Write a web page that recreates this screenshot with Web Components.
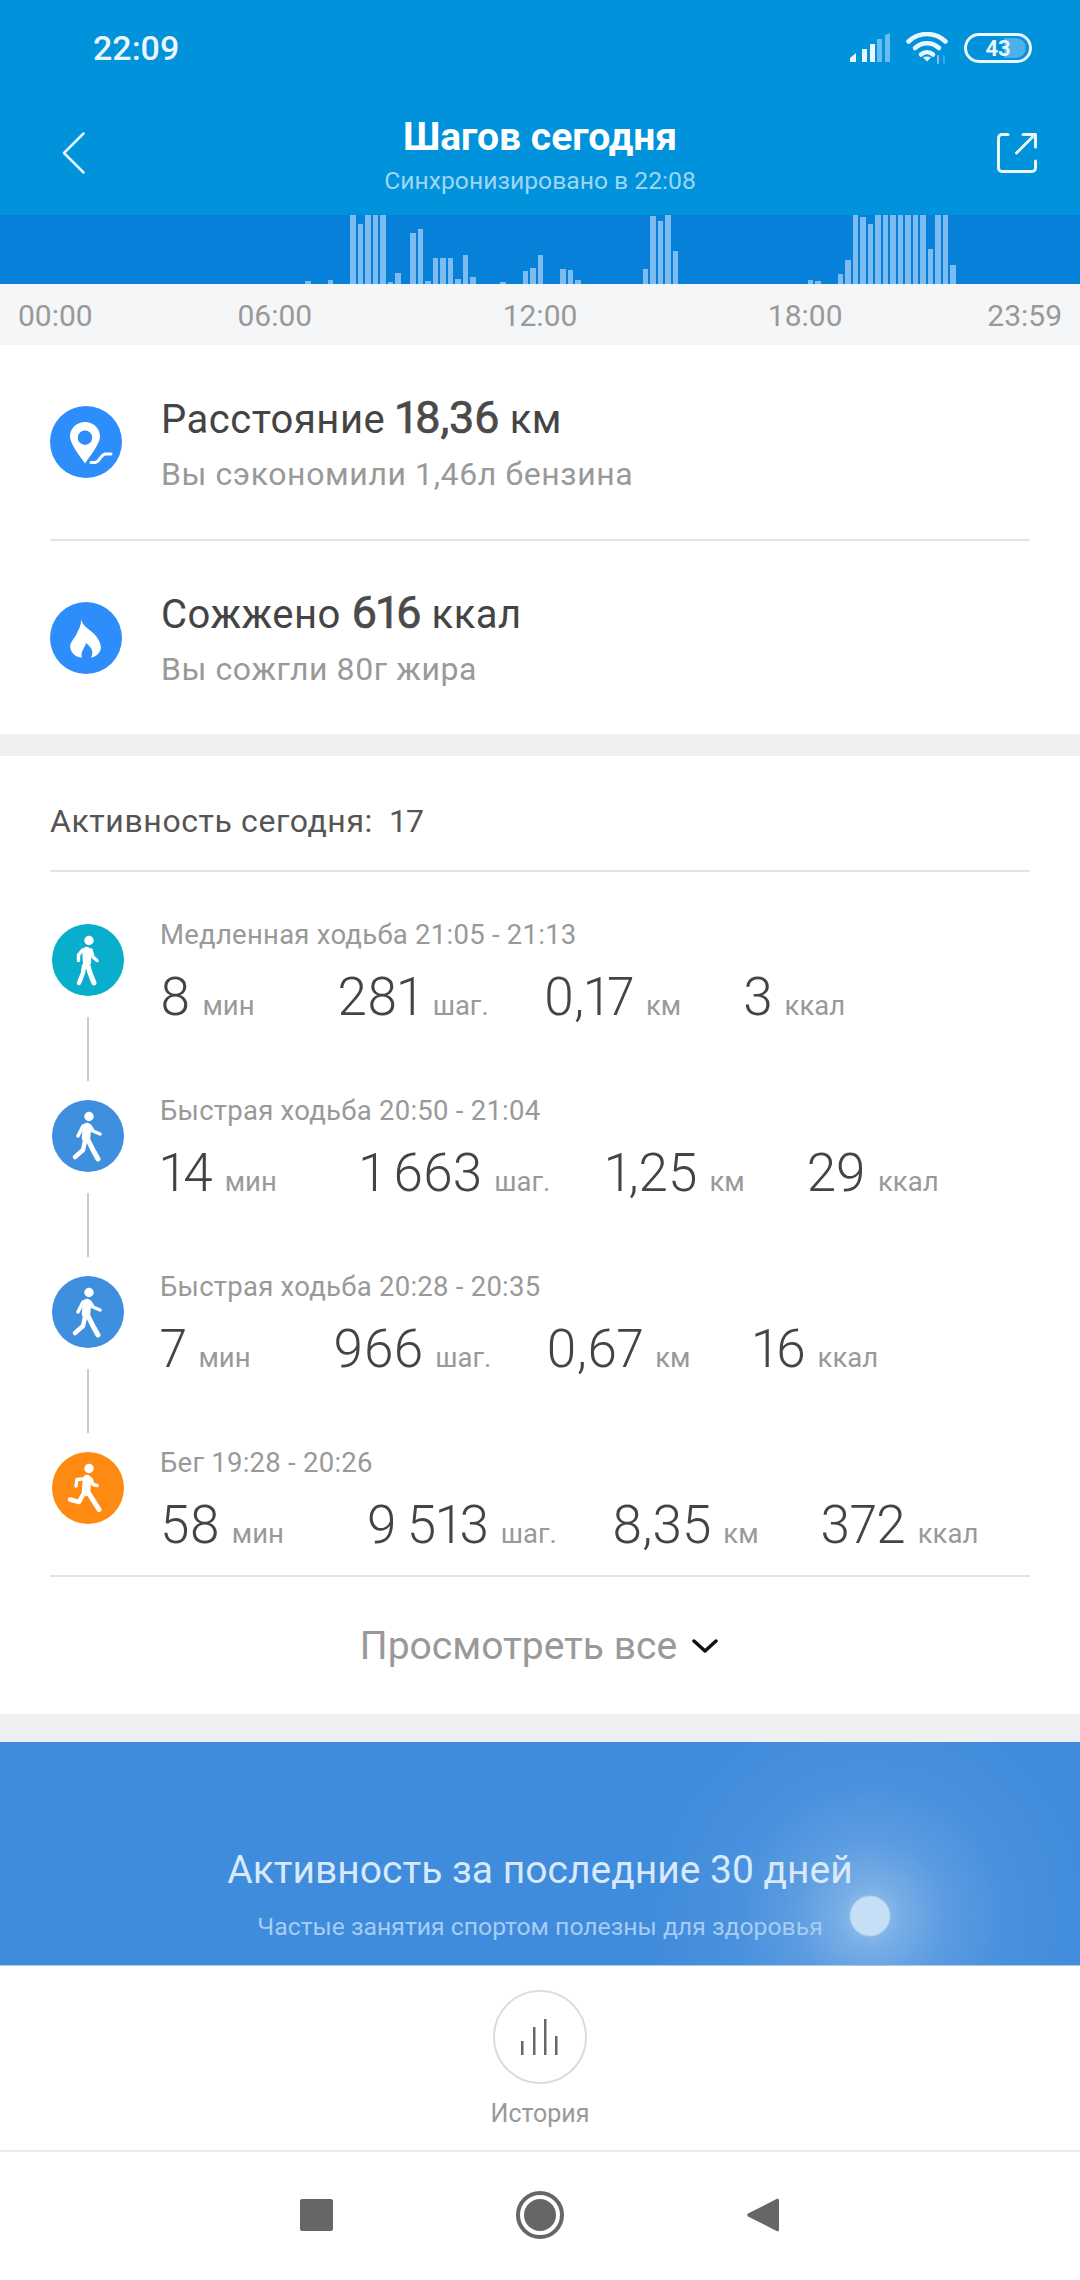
<!DOCTYPE html>
<html lang="ru">
<head>
<meta charset="utf-8">
<style>
  html, body { margin: 0; padding: 0; background: #fff; }
  body { font-family: Roboto, "Noto Sans", sans-serif; width: 1080px; height: 2280px; overflow: hidden; }
</style>
</head>
<body>
<app-header title="Шагов сегодня" sub="Синхронизировано в 22:08" time="22:09" battery="43"></app-header>
<step-chart></step-chart>
<summary-card>
  <summary-row icon="pin" sub="Вы сэкономили 1,46л бензина">Расстояние <b>18,36</b> км</summary-row>
  <summary-row icon="flame" sub="Вы сожгли 80г жира">Сожжено <b>616</b> ккал</summary-row>
</summary-card>
<activity-list count="17">
  <activity-item kind="slow" label="Медленная ходьба 21:05 - 21:13">
    <stat-value n="8" unit="мин"></stat-value><stat-value n="281" unit="шаг."></stat-value><stat-value n="0,17" unit="км"></stat-value><stat-value n="3" unit="ккал"></stat-value>
  </activity-item>
  <activity-item kind="fast" label="Быстрая ходьба 20:50 - 21:04">
    <stat-value n="14" unit="мин"></stat-value><stat-value n="1 663" unit="шаг."></stat-value><stat-value n="1,25" unit="км"></stat-value><stat-value n="29" unit="ккал"></stat-value>
  </activity-item>
  <activity-item kind="fast" label="Быстрая ходьба 20:28 - 20:35">
    <stat-value n="7" unit="мин"></stat-value><stat-value n="966" unit="шаг."></stat-value><stat-value n="0,67" unit="км"></stat-value><stat-value n="16" unit="ккал"></stat-value>
  </activity-item>
  <activity-item kind="run" label="Бег 19:28 - 20:26" last>
    <stat-value n="58" unit="мин"></stat-value><stat-value n="9 513" unit="шаг."></stat-value><stat-value n="8,35" unit="км"></stat-value><stat-value n="372" unit="ккал"></stat-value>
  </activity-item>
</activity-list>
<month-banner title="Активность за последние 30 дней" sub="Частые занятия спортом полезны для здоровья"></month-banner>
<history-button>История</history-button>
<nav-bar></nav-bar>

<script>
// шапка со статус-баром
class AppHeader extends HTMLElement {
  connectedCallback() {
    this.attachShadow({ mode: 'open' });
    this.shadowRoot.innerHTML = `
    <style>
      :host { display: block; height: 215px; background: #0092db; color: #fff; }
      .status { height: 96px; display: flex; align-items: center; padding: 0 48px 0 93px; box-sizing: border-box; }
      .time { font-size: 34px; font-weight: 500; color: #eaf6fd; flex: 1; }
      .status svg { display: block; }
      .wifi { margin-left: 16px; }
      .battery { margin-left: 16px; }
      .bar { height: 119px; display: grid; grid-template-columns: 140px 1fr 140px; }
      .back { padding: 36px 0 0 62px; }
      .share { padding: 37px 0 0 57px; }
      .mid { text-align: center; }
      h1 { margin: 16px 0 0; font-size: 39px; line-height: 50px; font-weight: 700; }
      p { margin: 4px 0 0; font-size: 24.700px; line-height: 30px; color: #9ed6f4; }
    </style>
    <div class="status">
      <span class="time">${this.getAttribute('time')}</span>
      <svg width="40" height="30" viewBox="0 0 40 30">
        <path d="M0 29V25L6 20V29Z" fill="#eaf6fd"/>
        <rect x="12" y="16" width="5" height="13" fill="#eaf6fd"/>
        <rect x="20" y="11" width="5" height="18" fill="#eaf6fd"/>
        <rect x="27" y="6" width="5" height="23" fill="#66bdee"/>
        <path d="M35 2L40 0V29H35Z" fill="#66bdee"/>
      </svg>
      <svg class="wifi" width="42" height="32" viewBox="0 0 42 32" fill="none" stroke="#eaf6fd" stroke-width="4.500" stroke-linecap="round">
        <path d="M2.5 9.5C13 -0.5 29 -0.5 39.5 9.5"/>
        <path d="M9 16C16 9.5 26 9.5 33 16"/>
        <path d="M15 22.500C18.500 19.500 23.500 19.500 27 22.500"/>
        <path d="M21 29.500L17 25.500C19.500 24 22.500 24 25 25.500Z" fill="#eaf6fd" stroke="none"/>
        <path d="M32 24V31" stroke="#7cc6ef" stroke-width="2"/>
        <path d="M38 24V31" stroke="#3ea7e3" stroke-width="2"/>
      </svg>
      <svg class="battery" width="68" height="30" viewBox="0 0 68 30">
        <rect x="1.500" y="1.500" width="65" height="27" rx="13.500" fill="none" stroke="#eaf6fd" stroke-width="3"/>
        <path d="M40 5H52a10 10 0 0 1 0 20H40Z" fill="#4cb1ea"/>
        <text x="34" y="23" text-anchor="middle" font-family="Roboto" font-size="22" font-weight="700" fill="#eaf6fd">${this.getAttribute('battery')}</text>
      </svg>
    </div>
    <div class="bar">
      <div class="back">
        <svg width="24" height="42" viewBox="0 0 24 42" fill="none" stroke="#eaf6fd" stroke-width="2.500" stroke-linecap="round" stroke-linejoin="round"><path d="M21.500 1.500L2 21L21.500 40.500"/></svg>
      </div>
      <div class="mid">
        <h1>${this.getAttribute('title')}</h1>
        <p>${this.getAttribute('sub')}</p>
      </div>
      <div class="share">
        <svg width="41" height="40" viewBox="0 0 41 40" fill="none" stroke="#eaf6fd" stroke-width="3" stroke-linecap="round" stroke-linejoin="round">
          <path d="M11 1.500H5a3.500 3.500 0 0 0-3.500 3.500V35a3.500 3.500 0 0 0 3.500 3.500H35a3.500 3.500 0 0 0 3.500-3.500V28"/>
          <path d="M19.500 20L38 1.500"/>
          <path d="M26 1.500H38.500V14"/>
        </svg>
      </div>
    </div>`;
  }
}

// столбики по 10 минут: индекс -> высота
const STEP_BARS = {40:3,43:4,46:69,47:60,48:69,49:69,50:69,51:2,52:11,54:51,55:55,56:3,57:26,58:26,59:26,60:5,61:29,62:7,66:2,69:13,70:16,71:29,74:15,75:14,76:4,85:15,86:68,87:63,88:69,89:33,107:4,108:3,111:10,112:24,113:69,114:67,115:60,116:69,117:69,118:69,119:69,120:69,121:69,122:69,123:35,124:69,125:69,126:19};

class StepChart extends HTMLElement {
  connectedCallback() {
    this.attachShadow({ mode: 'open' });
    let bars = '';
    for (let i = 0; i < 144; i++) {
      bars += `<i style="height:${STEP_BARS[i] || 0}px"></i>`;
    }
    this.shadowRoot.innerHTML = `
    <style>
      :host { display: block; }
      .bars { height: 69px; background: #0680d8; display: flex; align-items: flex-end; gap: 2px; padding-left: 5px; overflow: hidden; }
      i { display: block; flex: 0 0 5.500px; background: #7cbcf0; }
      .labels { height: 61px; background: #f5f6f8; display: flex; justify-content: space-between; align-items: center; padding: 2px 18px 0; box-sizing: border-box; font-size: 30px; color: #999; }
      .mid { width: 605px; display: flex; justify-content: space-between; }
    </style>
    <div class="bars">${bars}</div>
    <div class="labels">
      <span>00:00</span>
      <div class="mid"><span>06:00</span><span>12:00</span><span>18:00</span></div>
      <span>23:59</span>
    </div>`;
  }
}

class SummaryCard extends HTMLElement {
  connectedCallback() {
    this.attachShadow({ mode: 'open' });
    this.shadowRoot.innerHTML = `
    <style>
      :host { display: block; height: 389px; background: #fff; padding: 0 50px; }
      ::slotted(summary-row:first-child) { height: 196px; border-bottom: 2px solid #e4e4e4; }
      ::slotted(summary-row:last-child) { height: 193px; }
    </style>
    <slot></slot>`;
  }
}

const SUMMARY_ICONS = {
  pin: `<path fill-rule="evenodd" d="M35 16C26.500 16 20 22.500 20 30.500C20 38 30 50 35 57.500C40 50 50 38 50 30.500C50 22.500 43.500 16 35 16ZM35 24.500a7.200 7.200 0 1 1 0 14.400a7.200 7.200 0 0 1 0-14.400Z" fill="#fff"/>
        <path d="M41 56.500H45C50 56.500 50 48 56 48H61" fill="none" stroke="#fff" stroke-width="3" stroke-linecap="round"/>`,
  flame: `<path d="M31 17.500C33 25 40 27 46 34C51 41 53 47 48 52C46 54 43 55.500 41 55.500C44 50 42 46 36 41C35 46 30 50 32 55.500C27 55.500 22 52 20.500 47C19 40 24 38 27 31C29 27 31 24 31 17.500Z" fill="#fff"/>`
};

class SummaryRow extends HTMLElement {
  connectedCallback() {
    this.attachShadow({ mode: 'open' });
    this.shadowRoot.innerHTML = `
    <style>
      :host { display: flex; align-items: center; box-sizing: border-box; gap: 39px; }
      svg { display: block; flex: none; border-radius: 50%; background: #2d8efb; }
      .main { font-size: 40px; line-height: 50px; padding-top: 2px; color: #444; letter-spacing: .5px; }
      .sub { margin-top: 9px; font-size: 32px; line-height: 40px; color: #999; letter-spacing: .6px; }
      ::slotted(b) { font-size: 45px; font-weight: 400; letter-spacing: -.4px; color: #4a4a4a; -webkit-text-stroke: .7px #4a4a4a; font-variant-numeric: proportional-nums; }
    </style>
    <svg width="72" height="72" viewBox="0 0 72 72">${SUMMARY_ICONS[this.getAttribute('icon')]}</svg>
    <div>
      <div class="main"><slot></slot></div>
      <div class="sub">${this.getAttribute('sub')}</div>
    </div>`;
  }
}

class ActivityList extends HTMLElement {
  connectedCallback() {
    this.attachShadow({ mode: 'open' });
    this.shadowRoot.innerHTML = `
    <style>
      :host { display: block; margin-top: 22px; height: 958px; box-sizing: border-box; padding: 0 50px; background: #fff; }
      :host { box-shadow: 0 -22px 0 #eeeff1, 0 28px 0 #eeeff1; }
      .head { height: 116px; box-sizing: border-box; border-bottom: 2px solid #e4e4e4; display: flex; align-items: center; font-size: 32px; color: #555; padding-top: 16px; letter-spacing: .6px; }
      .head span { margin-left: 16px; letter-spacing: -1px; }
      .items { height: 705px; padding-top: 46px; box-sizing: border-box; border-bottom: 2px solid #e4e4e4; }
      .more { display: flex; justify-content: center; align-items: center; gap: 15px; height: 135px; padding: 2px 2px 0 0; font-size: 39px; color: #999; box-sizing: border-box; }
    </style>
    <div class="head">Активность сегодня:<span>${this.getAttribute('count')}</span></div>
    <div class="items"><slot></slot></div>
    <div class="more">Просмотреть все
      <svg width="26" height="14" viewBox="0 0 26 14" fill="none" stroke="#111" stroke-width="3.500" stroke-linecap="round" stroke-linejoin="round"><path d="M2 2L13 12L24 2"/></svg>
    </div>`;
  }
}

const WALKERS = {
  slow: { color: '#08aecb', paths: `
    <path d="M34.500 27L35 38" stroke-width="8.500"/>
    <path d="M30.500 26L26.500 31L26.500 36.500" stroke-width="3.500"/>
    <path d="M39 26L41 33L45 36.500" stroke-width="3.500"/>
    <path d="M32 42L31 49L27 59" stroke-width="4.500"/>
    <path d="M36 42L38 49L42 59" stroke-width="5"/>` },
  fast: { color: '#3f8fdf', paths: `
    <path d="M35 27L34 38" stroke-width="8.500"/>
    <path d="M31 26L26 36" stroke-width="3.500"/>
    <path d="M38 26L41 31L48 34" stroke-width="3.500"/>
    <path d="M33 41L31 50L23 57" stroke-width="4.500"/>
    <path d="M36 40L41 50L46 59" stroke-width="5"/>` },
  run: { color: '#fe8a12', paths: `
    <path d="M35 27L34 40" stroke-width="8.500"/>
    <path d="M30 27L25 27.500L24 34" stroke-width="3.500"/>
    <path d="M39 27L41 32.500L45 33.500" stroke-width="3.500"/>
    <path d="M36 40L47 57.500" stroke-width="5"/>
    <path d="M32 41L27 50L18 47.500" stroke-width="4.500"/>` }
};

class ActivityItem extends HTMLElement {
  connectedCallback() {
    this.attachShadow({ mode: 'open' });
    const w = WALKERS[this.getAttribute('kind')];
    this.shadowRoot.innerHTML = `
    <style>
      :host { display: grid; grid-template-columns: 72px 1fr; column-gap: 36px; height: 176px; padding-left: 2px; }
      :host([last]) { height: 130px; }
      .side { padding-top: 6px; }
      svg { display: block; border-radius: 50%; }
      .line { width: 2px; height: 64px; margin: 21px 0 0 35px; background: #c9c9c9; }
      :host([last]) .line { display: none; }
      .label { font-size: 27.500px; line-height: 34px; color: #999; letter-spacing: .25px; }
      .stats { display: flex; margin-top: 15px; }
      ::slotted(stat-value:nth-child(2)) { margin-left: 83px; }
      ::slotted(stat-value:nth-child(3)) { margin-left: 55px; }
      ::slotted(stat-value:nth-child(4)) { margin-left: 62px; }
    </style>
    <div class="side">
      <svg width="72" height="72" viewBox="0 0 72 72" style="background:${w.color}">
        <circle cx="37" cy="16.500" r="4.700" fill="#fff"/>
        <g fill="none" stroke="#fff" stroke-linecap="round" stroke-linejoin="round">${w.paths}</g>
      </svg>
      <div class="line"></div>
    </div>
    <div>
      <div class="label">${this.getAttribute('label')}</div>
      <div class="stats"><slot></slot></div>
    </div>`;
  }
}

class StatValue extends HTMLElement {
  connectedCallback() {
    this.attachShadow({ mode: 'open' });
    this.shadowRoot.innerHTML = `
    <style>
      :host { display: flex; align-items: baseline; gap: 12px; line-height: 60px; }
      .n { font-size: 53px; font-weight: 300; color: #444; word-spacing: -3px; font-variant-numeric: proportional-nums; }
      .u { font-size: 27.500px; color: #999; }
    </style>
    <span class="n">${this.getAttribute('n')}</span><span class="u">${this.getAttribute('unit')}</span>`;
  }
}

class MonthBanner extends HTMLElement {
  connectedCallback() {
    this.attachShadow({ mode: 'open' });
    this.shadowRoot.innerHTML = `
    <style>
      :host {
        display: block; height: 224px; margin-top: 28px; box-sizing: border-box; text-align: center; overflow: hidden;
        border-bottom: 1px solid #a9c8ea;
        background:
          radial-gradient(circle 21px at 870px 174px, #c6dff7 0, #c6dff7 19px, rgba(198,223,247,0) 21px),
          radial-gradient(circle 230px at 870px 174px, rgba(255,255,255,.5) 0, rgba(255,255,255,.3) 30px, rgba(255,255,255,.15) 75px, rgba(255,255,255,.06) 130px, rgba(255,255,255,0) 230px),
          #3f8bdc;
      }
      h2 { margin: 104px 0 0; font-size: 39px; line-height: 48px; font-weight: 400; color: #d7e9fb; }
      p { margin: 18px 0 0; font-size: 24.750px; line-height: 30px; color: #a6cdf3; }
    </style>
    <h2>${this.getAttribute('title')}</h2>
    <p>${this.getAttribute('sub')}</p>`;
  }
}

class HistoryButton extends HTMLElement {
  connectedCallback() {
    this.attachShadow({ mode: 'open' });
    this.shadowRoot.innerHTML = `
    <style>
      :host { display: block; height: 186px; box-sizing: border-box; padding-top: 24px; border-bottom: 2px solid #eaeaea; text-align: center; font-size: 25px; color: #999; }
      .ring { width: 94px; height: 94px; box-sizing: border-box; border: 2px solid #dcdcdc; border-radius: 50%; margin: 0 auto; display: flex; align-items: center; justify-content: center; }
      .txt { margin-top: 15px; line-height: 30px; }
    </style>
    <div class="ring">
      <svg width="38" height="36" viewBox="0 0 38 36" fill="#666">
        <rect x="0" y="22" width="2.500" height="14"/><rect x="12" y="8" width="2.500" height="28"/><rect x="23" y="0" width="2.500" height="36"/><rect x="34" y="17" width="2.500" height="19"/>
      </svg>
    </div>
    <div class="txt"><slot></slot></div>`;
  }
}

class NavBar extends HTMLElement {
  connectedCallback() {
    this.attachShadow({ mode: 'open' });
    this.shadowRoot.innerHTML = `
    <style>
      :host { display: flex; height: 126px; align-items: center; justify-content: center; gap: 183px; padding-right: 1px; box-sizing: border-box; background: #fff; }
      svg { display: block; }
    </style>
    <svg width="33" height="32" viewBox="0 0 33 32"><rect width="33" height="32" rx="2" fill="#666"/></svg>
    <svg width="48" height="48" viewBox="0 0 48 48"><circle cx="24" cy="24" r="22" fill="none" stroke="#666" stroke-width="4"/><circle cx="24" cy="24" r="16" fill="#666"/></svg>
    <svg width="32" height="34" viewBox="0 0 32 34"><path d="M30 0.800C31 0.300 32 1 32 2V32C32 33 31 33.700 30 33.200L1 18.500C0 18 0 16 1 15.500Z" fill="#666"/></svg>`;
  }
}

customElements.define('app-header', AppHeader);
customElements.define('step-chart', StepChart);
customElements.define('summary-card', SummaryCard);
customElements.define('summary-row', SummaryRow);
customElements.define('activity-list', ActivityList);
customElements.define('activity-item', ActivityItem);
customElements.define('stat-value', StatValue);
customElements.define('month-banner', MonthBanner);
customElements.define('history-button', HistoryButton);
customElements.define('nav-bar', NavBar);
</script>
</body>
</html>
